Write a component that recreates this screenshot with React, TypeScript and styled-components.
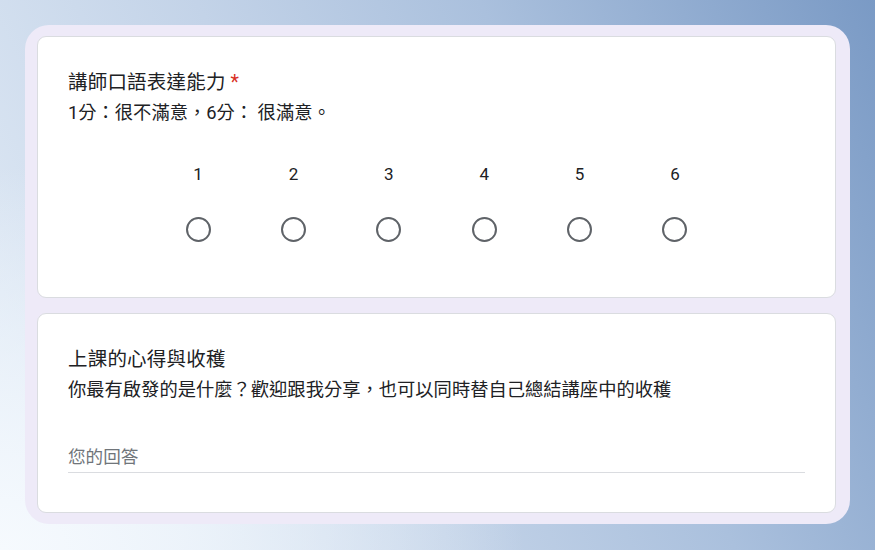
import React from "react";
import styled, { createGlobalStyle } from "styled-components";

const Global = createGlobalStyle`
  html, body { margin: 0; padding: 0; }
  body {
    width: 875px;
    height: 550px;
    overflow: hidden;
    font-family: Roboto, "Noto Sans CJK TC", sans-serif;
    color: #202124;
  }
`;

const Page = styled.div`
  width: 875px;
  height: 550px;
  box-sizing: border-box;
  padding: 25px 25px 26px 25px;
  background:
    radial-gradient(ellipse 60% 70% at 0% 100%, rgba(246, 250, 254, 1) 0%, rgba(240, 246, 252, 0.85) 35%, rgba(240, 246, 252, 0) 100%),
    linear-gradient(65deg, #e4edf7 0%, #c3d3e8 40%, #aac0dd 65%, #7a9ac5 100%);
`;

const Frame = styled.div`
  height: 100%;
  box-sizing: border-box;
  background: #eeeaf8;
  border-radius: 24px;
  padding: 11px 14px 12px 12px;
  display: flex;
  flex-direction: column;
  gap: 15px;
`;

const Card = styled.div<{ $bottom: number }>`
  background: #ffffff;
  border: 1px solid #dadce0;
  border-radius: 9px;
  padding: 34px 30px ${(p) => p.$bottom}px 30px;
  display: flex;
  flex-direction: column;
`;

const Title = styled.div`
  font-size: 19.5px;
  line-height: 24px;
  color: #202124;
  letter-spacing: 0.2px;
`;

const Star = styled.span`
  color: #d93025;
  margin-left: 5px;
`;

const Desc = styled.div`
  font-size: 18.3px;
  line-height: 24px;
  color: #202124;
  margin-top: 6px;
`;

const Scale = styled.div`
  display: flex;
  justify-content: center;
  margin-top: 37px;
`;

const Option = styled.label`
  width: 95.4px;
  display: flex;
  flex-direction: column;
  align-items: center;
`;

const Num = styled.div`
  font-family: Roboto, sans-serif;
  font-size: 17px;
  line-height: 24px;
  color: #202124;
`;

const Radio = styled.div`
  margin-top: 31px;
  width: 25px;
  height: 25px;
  box-sizing: border-box;
  border: 2px solid #5f6368;
  border-radius: 50%;
`;

const Answer = styled.div`
  margin-top: 43px;
  font-size: 17.6px;
  line-height: 24px;
  color: #70757a;
  padding-bottom: 3px;
  border-bottom: 1px solid #dadce0;
`;

export default function App() {
  const nums = [1, 2, 3, 4, 5, 6];
  return (
    <>
      <Global />
      <Page>
        <Frame>
          <Card $bottom={55}>
            <Title>
              講師口語表達能力<Star>*</Star>
            </Title>
            <Desc>1分：很不滿意，6分： 很滿意。</Desc>
            <Scale>
              {nums.map((n) => (
                <Option key={n}>
                  <Num>{n}</Num>
                  <Radio />
                </Option>
              ))}
            </Scale>
          </Card>
          <Card $bottom={39}>
            <Title>上課的心得與收穫</Title>
            <Desc>你最有啟發的是什麼？歡迎跟我分享，也可以同時替自己總結講座中的收穫</Desc>
            <Answer>您的回答</Answer>
          </Card>
        </Frame>
      </Page>
    </>
  );
}
